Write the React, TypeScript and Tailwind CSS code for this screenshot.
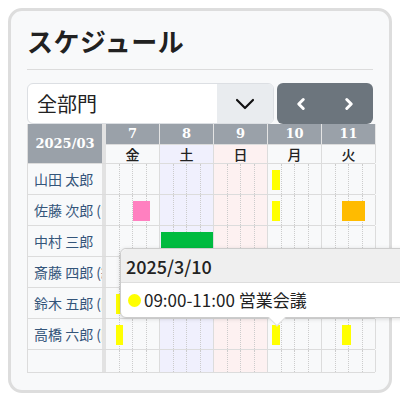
import React from "react"
import { ChevronDown, ChevronLeft, ChevronRight } from "lucide-react"

const days = [
  { d: 7, w: "金", bg: "bg-[#f8f9fa]" },
  { d: 8, w: "土", bg: "bg-[#f0f0fd]" },
  { d: 9, w: "日", bg: "bg-[#fdf1f1]" },
  { d: 10, w: "月", bg: "bg-[#f8f9fa]" },
  { d: 11, w: "火", bg: "bg-[#f8f9fa]" },
]

interface Ev {
  x: number
  w: number
  color: string
}

const members: { name: string; events: Ev[] }[] = [
  { name: "山田 太郎", events: [{ x: 244, w: 8, color: "#ffff00" }] },
  {
    name: "佐藤 次郎 (営業)",
    events: [
      { x: 105, w: 17, color: "#ff80c0" },
      { x: 244, w: 8, color: "#ffff00" },
      { x: 314, w: 23, color: "#ffbb00" },
    ],
  },
  { name: "中村 三郎", events: [{ x: 133, w: 52, color: "#00bb40" }] },
  { name: "斎藤 四郎 (総務)", events: [] },
  { name: "鈴木 五郎 (開発)", events: [{ x: 88, w: 7, color: "#ffff00" }] },
  {
    name: "高橋 六郎 (開発)",
    events: [
      { x: 88, w: 7, color: "#ffff00" },
      { x: 244, w: 8, color: "#ffff00" },
      { x: 314, w: 9, color: "#ffff00" },
    ],
  },
]

const jp = "font-['Noto_Sans_CJK_JP','Noto_Sans',sans-serif]"
const serif = "font-['DejaVu_Serif',serif]"

const DayCells = () => (
  <>
    {days.map((day) => (
      <div
        key={day.d}
        className={`flex w-[54px] shrink-0 border-r border-[#dcdcdc] ${day.bg}`}>
        {[0, 1, 2, 3].map((i) => (
          <div
            key={i}
            className={`flex-1 ${i < 3 ? "border-r border-dotted border-[#cccccc]" : ""}`}
          />
        ))}
      </div>
    ))}
  </>
)

export default function App() {
  return (
    <div className={`w-[400px] h-[400px] overflow-hidden bg-white ${jp}`}>
      <div className="relative ml-2 mt-2 w-[384px] h-[385px] rounded-[14px] border-[3px] border-[#dddddd] bg-[#f8f9fa] px-4 pt-[12px]">
        <h1 className="text-[26px] leading-[36px] font-bold text-[#212121] tracking-[0.5px]">
          スケジュール
        </h1>
        <div className="mt-[10px] border-t border-[#dcdcdc]" />

        <div className="mt-[13px] flex gap-[3px]">
          <div className="flex h-[41px] w-[247px] overflow-hidden rounded-md border border-[#dcdfe3] bg-white">
            <div className="flex flex-1 items-center pl-[9px] text-[20px] text-[#222]">全部門</div>
            <div className="flex w-[56px] items-center justify-center bg-[#e9ecef]">
              <ChevronDown size={32} strokeWidth={1.6} color="#111" />
            </div>
          </div>
          <div className="flex h-[41px] flex-1 items-center justify-between rounded-md bg-[#6c757d] px-[15px]">
            <ChevronLeft size={18} strokeWidth={4} color="#fff" />
            <ChevronRight size={18} strokeWidth={4} color="#fff" />
          </div>
        </div>

        <div className="relative flex h-[249px] w-[348px] flex-col border-l border-b border-[#dcdcdc]">
          {/* header */}
          <div className="flex h-[40px] shrink-0 border-b border-[#dcdcdc]">
            <div
              className={`flex w-[78px] shrink-0 items-center justify-center border-r-4 border-[#e2e2e2] bg-[#9aa1a9] text-[13px] font-bold text-white ${serif}`}>
              2025/03
            </div>
            <div className="flex flex-col">
              <div className="flex h-[20px]">
                {days.map((day) => (
                  <div
                    key={day.d}
                    className={`flex w-[54px] items-center justify-center border-r border-[#e4e4e4] bg-[#9aa1a9] text-[13px] font-bold text-white ${serif}`}>
                    {day.d}
                  </div>
                ))}
              </div>
              <div className="flex h-[19px]">
                {days.map((day) => (
                  <div
                    key={day.d}
                    className={`flex w-[54px] items-center justify-center border-r border-t border-[#dcdcdc] text-[14px] font-medium text-[#222] ${day.bg}`}>
                    {day.w}
                  </div>
                ))}
              </div>
            </div>
          </div>

          {/* rows */}
          {members.map((m) => (
            <div key={m.name} className="relative flex h-[31px] shrink-0 border-b border-[#dcdcdc]">
              <div className="w-[78px] shrink-0 overflow-hidden whitespace-nowrap border-r-4 border-[#e2e2e2] pl-[6px] text-[14px] leading-[30px] text-[#34557a]">
                {m.name}
              </div>
              <DayCells />
              {m.events.map((e, i) => (
                <div
                  key={i}
                  className="absolute top-[6px] h-[20px]"
                  style={{ left: e.x, width: e.w, backgroundColor: e.color }}
                />
              ))}
            </div>
          ))}
          <div className="flex flex-1">
            <div className="w-[78px] shrink-0 border-r-4 border-[#e2e2e2]" />
            <DayCells />
          </div>

          {/* tooltip */}
          <div className="absolute left-[92px] top-[124px] w-[300px] rounded-md border border-[#cccccc] bg-white shadow-[0_1px_4px_rgba(0,0,0,0.15)]">
            <div className="h-[34px] rounded-t-md border-b border-[#dddddd] bg-[#efefef] pl-[5px] text-[18px] font-medium leading-[34px] text-[#222]">
              2025/3/10
            </div>
            <div className="flex h-[34px] items-center pl-[7px] text-[17px] text-[#222]">
              <span className="mr-[3px] inline-block h-[13px] w-[13px] rounded-full bg-[#ffff00]" />
              09:00-11:00 営業会議
            </div>
            <div className="absolute bottom-[-7px] left-[150px] h-[12px] w-[12px] rotate-45 border-r border-b border-[#dddddd] bg-white" />
          </div>
        </div>
      </div>
    </div>
  )
}
